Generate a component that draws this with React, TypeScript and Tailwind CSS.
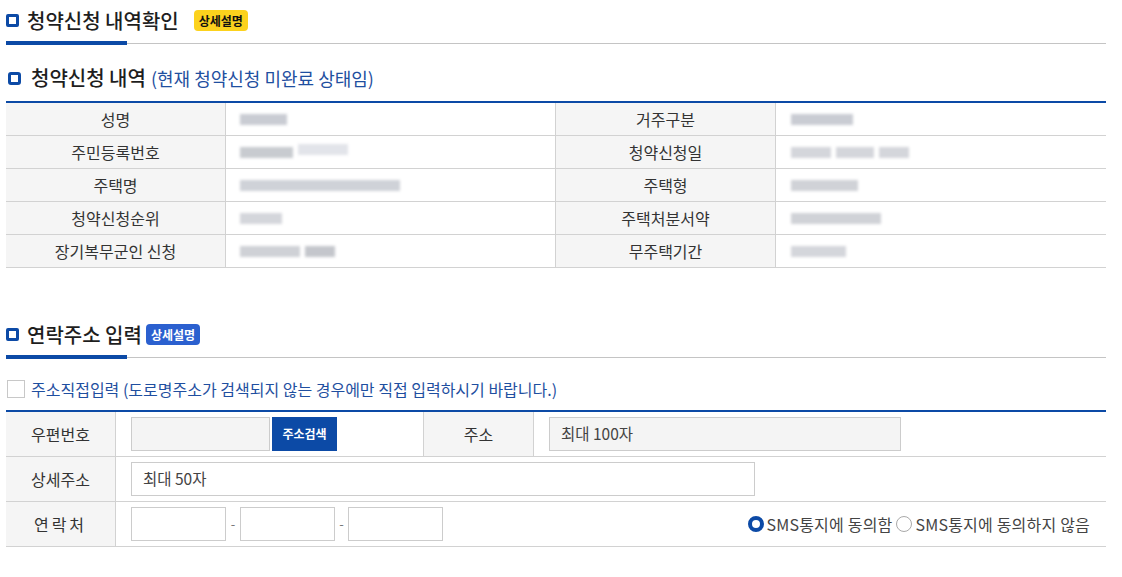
const blue = 'bg-[#0c4aa6]';

function Heading({ title, badge }: { title: string; badge?: 'yellow' | 'blue' }) {
  return (
    <div className="flex items-center h-[41px]">
      <span className="w-[13px] h-[13px] border-[3px] border-[#0c4aa6] rounded-[2px] mr-[8px]" />
      <h2 className="text-[20px] font-medium text-[#1e1e1e]">{title}</h2>
      {badge === 'yellow' && (
        <span className="ml-[15px] h-[21px] px-[5px] flex items-center rounded-[4px] bg-[#fcd21d] text-[12px] font-bold text-[#111]">상세설명</span>
      )}
      {badge === 'blue' && (
        <span className="ml-[4px] h-[21px] px-[5px] flex items-center rounded-[4px] bg-[#2b60cf] text-[12px] font-bold text-white">상세설명</span>
      )}
    </div>
  );
}

function Underline() {
  return (
    <div className="flex items-center h-[4px]">
      <div className={`w-[121px] h-[4px] ${blue}`} />
      <div className="flex-1 h-px bg-[#c4c4c4]" />
    </div>
  );
}

function Blur({ parts }: { parts: [number, string][] }) {
  return (
    <span className="flex items-center gap-[5px] blur-[1.5px]">
      {parts.map(([w, c], i) => (
        <span key={i} className={`h-[11px] ${c}`} style={{ width: w }} />
      ))}
    </span>
  );
}

const rows: { l1: string; v1: [number, string][]; l2: string; v2: [number, string][] }[] = [
  { l1: '성명', v1: [[47, 'bg-[#c9ccd3]']], l2: '거주구분', v2: [[62, 'bg-[#c9ccd3]']] },
  { l1: '주민등록번호', v1: [[53, 'bg-[#c8cbd0]'], [50, 'bg-[#e2e4ea] h-[6px] -mt-[6px]']], l2: '청약신청일', v2: [[40, 'bg-[#d4d6db]'], [38, 'bg-[#d4d6db]'], [30, 'bg-[#d4d6db]']] },
  { l1: '주택명', v1: [[160, 'bg-[#cfd2d8]']], l2: '주택형', v2: [[67, 'bg-[#d0d2d7]']] },
  { l1: '청약신청순위', v1: [[42, 'bg-[#d4d6db]']], l2: '주택처분서약', v2: [[90, 'bg-[#d0d2d7]']] },
  { l1: '장기복무군인 신청', v1: [[60, 'bg-[#cfd1d6]'], [30, 'bg-[#c4c6cc]']], l2: '무주택기간', v2: [[55, 'bg-[#d4d6db]']] },
];

function Radio({ checked, label }: { checked?: boolean; label: string }) {
  return (
    <label className="flex items-center gap-[3px]">
      {checked ? (
        <span className="w-[16px] h-[16px] rounded-full border-[4px] border-[#0c4aa6] bg-white" />
      ) : (
        <span className="w-[16px] h-[16px] rounded-full border border-[#a9a9a9] bg-white" />
      )}
      <span>{label}</span>
    </label>
  );
}

export default function App() {
  const input = 'h-[34px] border border-[#cccccc] px-[11px] flex items-center text-[15.5px] text-[#444]';
  return (
    <div className="w-[1122px] h-[577px] bg-white px-[6px] font-['Noto_Sans_CJK_KR',sans-serif] text-[#333]">
      <div className="w-[1100px]">
        <Heading title="청약신청 내역확인" badge="yellow" />
        <Underline />

        <div className="mt-[18px] h-[30px] flex items-center">
          <span className="w-[13px] h-[13px] border-[3px] border-[#0c4aa6] rounded-[3px] mr-[10px] ml-[2px]" />
          <h2 className="text-[20px] font-medium text-[#1e1e1e]">청약신청 내역</h2>
          <span className="ml-[5px] text-[18px] text-[#1f4fa0]">(현재 청약신청 미완료 상태임)</span>
        </div>

        <div className="mt-[8px] border-t-2 border-[#0c4aa6] text-[16px]">
          {rows.map((r) => (
            <div key={r.l1} className="flex h-[33px] border-b border-[#d2d2d2]">
              <div className="w-[220px] bg-[#f5f5f5] border-r border-[#d2d2d2] flex items-center justify-center">{r.l1}</div>
              <div className="w-[330px] border-r border-[#d2d2d2] flex items-center pl-[14px]"><Blur parts={r.v1} /></div>
              <div className="w-[220px] bg-[#f5f5f5] border-r border-[#d2d2d2] flex items-center justify-center">{r.l2}</div>
              <div className="flex-1 flex items-center pl-[15px]"><Blur parts={r.v2} /></div>
            </div>
          ))}
        </div>

        <div className="mt-[46px]">
          <Heading title="연락주소 입력" badge="blue" />
        </div>
        <Underline />

        <div className="mt-[18px] h-[24px] flex items-center text-[16px] text-[#1f4fa0]">
          <span className="w-[18px] h-[18px] border border-[#c8c8c8] bg-white ml-[1px] mr-[6px]" />
          주소직접입력 (도로명주소가 검색되지 않는 경우에만 직접 입력하시기 바랍니다.)
        </div>

        <div className="mt-[9px] border-t-2 border-[#0c4aa6] text-[16px]">
          <div className="flex h-[45px] border-b border-[#d2d2d2]">
            <div className="w-[110px] bg-[#f5f5f5] border-r border-[#d2d2d2] flex items-center justify-center">우편번호</div>
            <div className="w-[307px] flex items-center pl-[15px] gap-[2px]">
              <div className={`${input} w-[139px] bg-[#f4f4f4]`} />
              <button className="h-[34px] w-[65px] bg-[#0c4aa6] text-white text-[12px] font-bold">주소검색</button>
            </div>
            <div className="w-[111px] bg-[#f5f5f5] border-x border-[#d2d2d2] flex items-center justify-center">주소</div>
            <div className="flex-1 flex items-center pl-[15px]">
              <div className={`${input} w-[352px] bg-[#f4f4f4]`}>최대 100자</div>
            </div>
          </div>
          <div className="flex h-[45px] border-b border-[#d2d2d2]">
            <div className="w-[110px] bg-[#f5f5f5] border-r border-[#d2d2d2] flex items-center justify-center">상세주소</div>
            <div className="flex-1 flex items-center pl-[15px]">
              <div className={`${input} w-[624px] bg-white`}>최대 50자</div>
            </div>
          </div>
          <div className="flex h-[45px] border-b border-[#d2d2d2]">
            <div className="w-[110px] bg-[#f5f5f5] border-r border-[#d2d2d2] flex items-center justify-center tracking-[3px]">연락처</div>
            <div className="flex-1 flex items-center pl-[15px] pr-[16px]">
              <div className={`${input} w-[95px] bg-white`} />
              <span className="w-[14px] text-center text-[#777] text-[13px]">-</span>
              <div className={`${input} w-[95px] bg-white`} />
              <span className="w-[13px] text-center text-[#777] text-[13px]">-</span>
              <div className={`${input} w-[95px] bg-white`} />
              <div className="ml-auto flex items-center gap-[4px] text-[16px] text-[#444] tracking-[0.2px]">
                <Radio checked label="SMS통지에 동의함" />
                <Radio label="SMS통지에 동의하지 않음" />
              </div>
            </div>
          </div>
        </div>
      </div>
    </div>
  );
}
